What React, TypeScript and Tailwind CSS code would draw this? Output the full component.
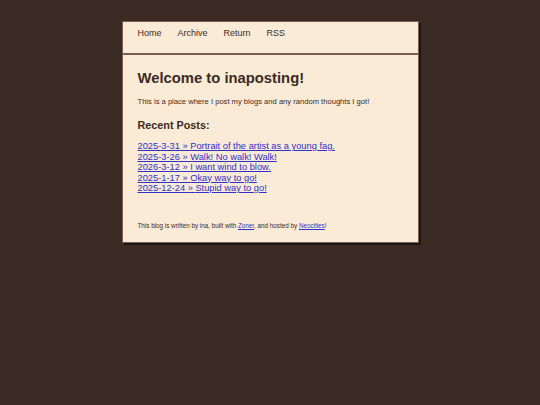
import React from 'react';

const posts = [
  { date: '2025-3-31', title: 'Portrait of the artist as a young fag.' },
  { date: '2025-3-26', title: 'Walk! No walk! Walk!' },
  { date: '2026-3-12', title: 'I want wind to blow.' },
  { date: '2025-1-17', title: 'Okay way to go!' },
  { date: '2025-12-24', title: 'Stupid way to go!' },
];

const navLinks = ['Home', 'Archive', 'Return', 'RSS'];

const boxClass =
  'bg-[#faebd7] border border-[#7a5c50] shadow-[2px_2px_0_#1e1512]';

export default function App() {
  return (
    <div
      className="min-h-[405px] w-full bg-[#3a2a24] text-[#3a2a24] pt-[21px]"
      style={{ fontFamily: '"Liberation Sans", Arial, sans-serif' }}
    >
      <div className="mx-auto w-[297px] flex flex-col">
        <nav className={`${boxClass} h-[33px] flex items-start gap-[16px] pl-[15px] pt-[5px]`}>
          {navLinks.map((l) => (
            <a key={l} href="#" className="text-[9px] leading-[12px] text-[#3a2a24] no-underline">
              {l}
            </a>
          ))}
        </nav>
        <main className={`${boxClass} h-[189px] px-[15px] pt-[13px]`}>
          <h1 className="text-[14.8px] font-bold leading-[20px]">Welcome to inaposting!</h1>
          <p className="text-[7.6px] mt-[9px] leading-[10px]">
            This is a place where I post my blogs and any random thoughts I got!
          </p>
          <h2 className="text-[10.8px] font-bold mt-[11px] leading-[14px]">Recent Posts:</h2>
          <ul className="mt-[9px] flex flex-col">
            {posts.map((p) => (
              <li key={p.date} className="text-[9.3px] leading-[10.5px]">
                <a href="#" className="text-[#3030c8] underline">
                  {p.date} » {p.title}
                </a>
              </li>
            ))}
          </ul>
          <p className="text-[6.3px] mt-[28px] leading-[8px]">
            This blog is written by ina, built with{' '}
            <a href="#" className="text-[#3030c8] underline">Zoner</a>, and hosted by{' '}
            <a href="#" className="text-[#3030c8] underline">Neocities</a>!
          </p>
        </main>
      </div>
    </div>
  );
}
